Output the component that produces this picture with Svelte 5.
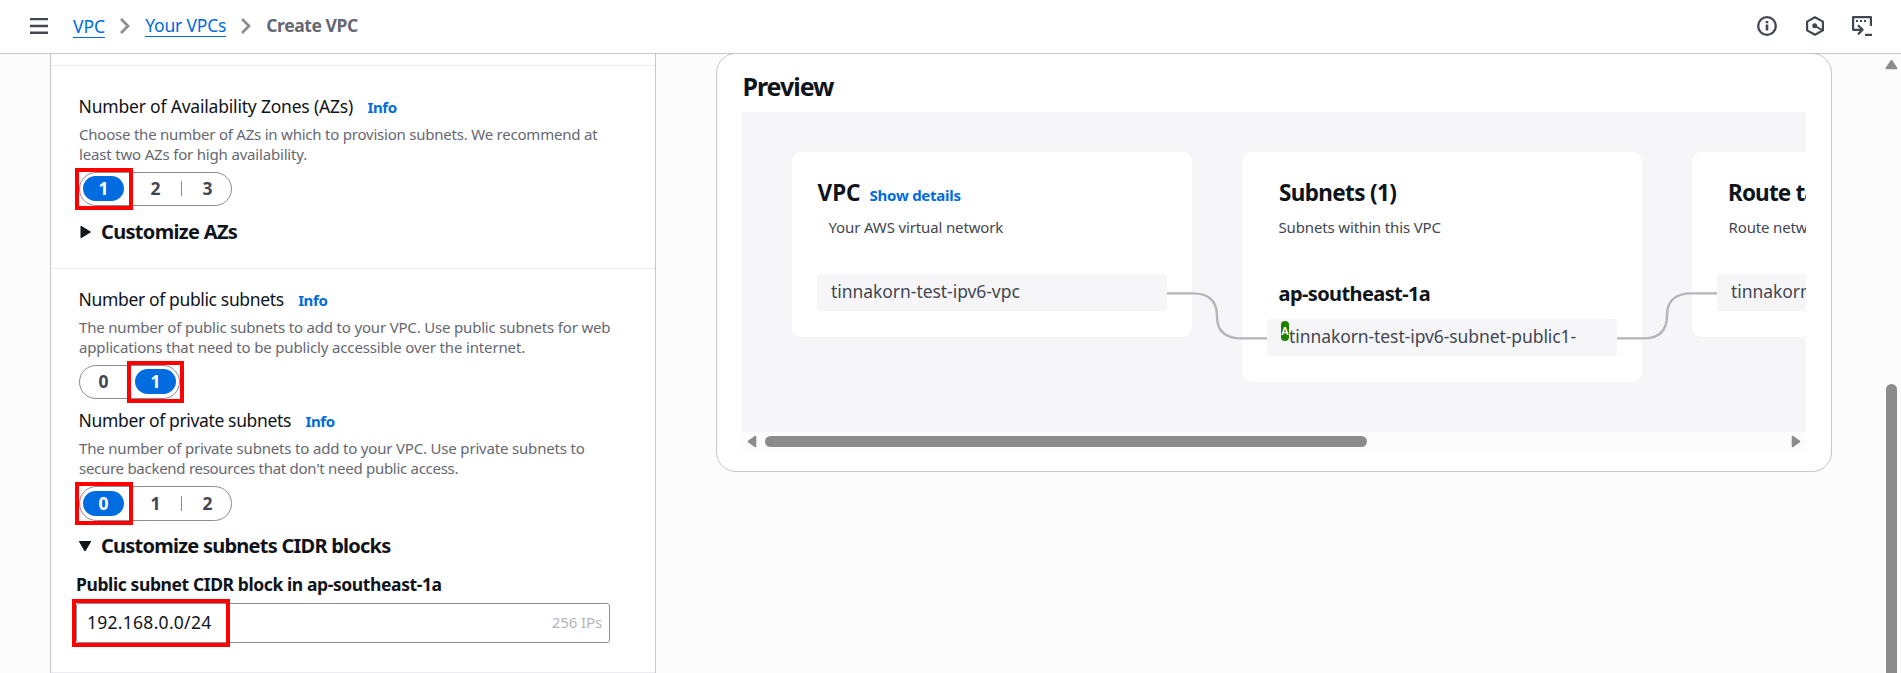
<script>
  const sets = {
    az: { options: [1, 2, 3], selected: 0 },
    pub: { options: [0, 1], selected: 1 },
    priv: { options: [0, 1, 2], selected: 0 },
  };
</script>

{#snippet segmented(set, tall)}
  <div class="segmented" class:tall>
    {#each set.options as option, i}
      {#if i > 0}
        <span class="sep" class:line={i - 1 !== set.selected && i !== set.selected}></span>
      {/if}
      <button class="segment" class:selected={i === set.selected}>
        {option}
        {#if i === set.selected}
          <span class="mark" class:last={i === set.options.length - 1}></span>
        {/if}
      </button>
    {/each}
  </div>
{/snippet}

{#snippet chevron()}
  <svg class="chevron" width="12" height="18" viewBox="0 0 12 18"><path d="M2 2l7 7-7 7" fill="none" stroke="#8c8c94" stroke-width="2.7" /></svg>
{/snippet}

<div class="page">
  <header>
    <svg class="burger" width="18" height="18" viewBox="0 0 18 18"><path d="M0 2.1h18M0 9h18M0 15.8h18" stroke="#424650" stroke-width="2.4" /></svg>
    <nav>
      <a class="crumb first" href="#vpc">VPC</a>
      {@render chevron()}
      <a class="crumb second" href="#vpcs">Your VPCs</a>
      {@render chevron()}
      <span class="current">Create VPC</span>
    </nav>
    <div class="tools">
      <svg width="20" height="20" viewBox="0 0 20 20" fill="none" stroke="#424650" stroke-width="2.3"><circle cx="10" cy="10" r="8.8" /><path d="M10 8.6v6M10 5v2.3" stroke-width="2.6" /></svg>
      <svg width="20" height="20" viewBox="0 0 20 20" fill="none" stroke="#424650" stroke-width="2.2" stroke-linejoin="round"><path d="M10 1.3l7.9 4.3v8.8L10 18.7l-7.9-4.3V5.6z" /><circle cx="9.7" cy="9.8" r="2.5" fill="#424650" stroke="none" /><path d="M10 10l7 4" stroke-width="2" /></svg>
      <svg width="20" height="20" viewBox="0 0 20 20" fill="none" stroke="#424650" stroke-width="2.2"><path d="M18.9 10V1.1H1.1v12.7h9M6 9.2l4.6 4.6L6 18.4" stroke-linejoin="round" /><path d="M4 5h2M8 5h2M12 5h2M13 18.8h7" /></svg>
    </div>
  </header>

  <main>
    <section class="form">
      <div class="block top"></div>
      <div class="block zones">
        <div class="label"><span class="name wide">Number of Availability Zones (AZs)</span><a href="#info">Info</a></div>
        <p><span class="tight">Choose the number of AZs in which to provision subnets. We recommend at</span><br />least two AZs for high availability.</p>
        {@render segmented(sets.az, false)}
        <div class="expander">
          <svg width="14" height="14" viewBox="0 0 14 14"><path d="M3 1.2v11.6L12.4 7z" fill="#0f141a" stroke="#0f141a" stroke-linejoin="round" /></svg>
          <span>Customize AZs</span>
        </div>
      </div>
      <div class="block subnets">
        <div class="label"><span class="name">Number of public subnets</span><a href="#info">Info</a></div>
        <p>The number of public subnets to add to your VPC. Use public subnets for web<br /><span class="loose">applications that need to be publicly accessible over the internet.</span></p>
        {@render segmented(sets.pub, false)}
        <div class="label second"><span class="name">Number of private subnets</span><a href="#info">Info</a></div>
        <p>The number of private subnets to add to your VPC. Use private subnets to<br /><span class="tighter">secure backend resources that don't need public access.</span></p>
        {@render segmented(sets.priv, true)}
        <div class="expander open">
          <svg width="14" height="14" viewBox="0 0 14 14"><path d="M1.4 2.5h11.3L7 12z" fill="#0f141a" stroke="#0f141a" stroke-linejoin="round" /></svg>
          <span>Customize subnets CIDR blocks</span>
        </div>
        <div class="cidr-label">Public subnet CIDR block in ap-southeast-1a</div>
        <div class="input">
          <span class="value">192.168.0.0/24</span>
          <span class="hint">256 IPs</span>
          <span class="mark"></span>
        </div>
      </div>
    </section>

    <section class="preview">
      <h2>Preview</h2>
      <div class="map">
        <div class="card">
          <h3 class="vpc">VPC<a href="#details">Show details</a></h3>
          <div class="sub vpc">Your AWS virtual network</div>
          <div class="row first">tinnakorn-test-ipv6-vpc</div>
        </div>
        <div class="card">
          <h3>Subnets (1)</h3>
          <div class="sub">Subnets within this VPC</div>
          <h4>ap-southeast-1a</h4>
          <div class="row zone"><span class="badge">A</span><span>tinnakorn-test-ipv6-subnet-public1-</span></div>
        </div>
        <div class="card">
          <h3 class="routes">Route tables (1)</h3>
          <div class="sub">Route network traffic to resources</div>
          <div class="row first">tinnakorn-test-ipv6-rtb-public</div>
        </div>
        <svg class="links" width="1064" height="320" viewBox="0 0 1064 320" fill="none" stroke="#b4b4bb" stroke-width="2.4">
          <path d="M425 181.4h26q24 0 24 23 0 22 25 22h25" />
          <path d="M875 226.4h26q24 0 24-23 0-22 25-22h25" />
        </svg>
      </div>
      <div class="hscroll">
        <svg width="10" height="13" viewBox="0 0 10 13"><path d="M8.5 1.5v10L1.5 6.5z" fill="#8b8b8b" stroke="#8b8b8b" stroke-width="1.6" stroke-linejoin="round" /></svg>
        <div class="rail"><div class="thumb"></div></div>
        <svg width="10" height="13" viewBox="0 0 10 13"><path d="M1.5 1.5v10l7-5z" fill="#8b8b8b" stroke="#8b8b8b" stroke-width="1.6" stroke-linejoin="round" /></svg>
      </div>
    </section>

    <aside class="vscroll">
      <svg width="13" height="11" viewBox="0 0 13 11"><path d="M1.5 9.3h10L6.5 1.7z" fill="#8b8b8b" stroke="#8b8b8b" stroke-width="1.8" stroke-linejoin="round" /></svg>
      <div class="thumb"></div>
    </aside>
  </main>
</div>

<style>
  :global(body) { margin: 0; overflow: hidden; }
  .page {
    display: flex; flex-direction: column; box-sizing: border-box;
    width: 100vw; height: 673px; overflow: hidden;
    background: #fcfcfd; color: #0f141a;
    font: 17.5px/25px "Noto Sans", "Open Sans", sans-serif;
  }
  .page * { box-sizing: border-box; }
  svg { display: block; flex: none; }
  a { color: #006ce0; text-decoration: none; }
  p, h2, h3, h4 { margin: 0; }

  header {
    position: relative; z-index: 2; flex: none;
    display: flex; align-items: center;
    height: 54px; padding: 0 29px 0 30px;
    background: #fff; border-bottom: 1px solid #c6c6cd;
  }
  .burger { margin-top: -1px; }
  nav { display: flex; align-items: center; margin: -2px 0 0 25px; }
  .crumb { line-height: 22px; border-bottom: 1px solid #006ce0; letter-spacing: -0.18px; }
  .crumb.first { margin-top: 2px; letter-spacing: 0; }
  .chevron { margin: 1px 14px 0 14px; }
  .current { color: #656871; font-weight: 700; letter-spacing: -0.42px; }
  .tools { display: flex; gap: 28px; margin: -1px 0 0 auto; }
  .tools svg:last-child { margin-left: -1px; }

  main { flex: 1; display: flex; min-height: 0; padding-left: 50px; }

  .form {
    width: 606px; flex: none; background: #fff;
    border: solid #c6c6cd; border-width: 0 1px;
  }
  .block { border-bottom: 1px solid #ebebf0; padding: 0 44px 0 28px; }
  .top { height: 12px; }
  .zones { height: 203px; padding-top: 28px; }
  .subnets { height: 404px; padding-top: 18px; }
  .label { display: flex; align-items: baseline; height: 25px; margin-left: -0.4px; }
  .label.second { margin-top: 9px; }
  .name { letter-spacing: -0.36px; }
  .name.wide { letter-spacing: -0.2px; }
  .label a { margin-left: 14.5px; font-size: 15px; font-weight: 700; letter-spacing: -0.4px; }
  p {
    margin-top: 5px; color: #656871; white-space: nowrap;
    font-size: 15px; line-height: 20px; letter-spacing: -0.18px;
  }
  .tight { letter-spacing: -0.22px; }
  .tighter { letter-spacing: -0.28px; }
  .loose { letter-spacing: -0.15px; }
  .segmented {
    display: flex; align-items: flex-start; width: max-content; height: 34px;
    margin: 8px 0 0; padding: 3px 3px 0;
    border: 1px solid #8c8c94; border-radius: 17px;
  }
  .segmented.tall { height: 35px; padding-top: 4px; border-radius: 18px; }
  .segment {
    position: relative; width: 41px; height: 25px; padding: 0;
    border: 0; border-radius: 13px; background: none; color: #424650;
    font: inherit; font-weight: 700; line-height: 23px; text-align: center;
  }
  .segment.selected { background: #006ce0; color: #fff; }
  .sep { display: flex; justify-content: center; width: 11px; height: 15px; margin-top: 5px; }
  .sep.line::before { content: ""; width: 1px; background: #8c8c94; }
  .mark { position: absolute; border: 4px solid #f00; }
  .segment .mark { left: -8px; top: -8px; width: 58px; height: 42px; }
  .segment .mark.last { width: 57px; }
  .tall .segment .mark { top: -9px; height: 43px; }
  .expander {
    display: flex; align-items: center; gap: 9px; height: 25px; margin-top: 13px;
    font-size: 20px; font-weight: 700; letter-spacing: -0.68px;
  }
  .expander svg { margin: 1px 0 0 -1px; }
  .expander.open { margin-top: 12px; letter-spacing: -0.76px; }
  .cidr-label { margin: 14px 0 0 -3px; font-weight: 700; letter-spacing: -0.4px; }
  .input {
    position: relative; display: flex; align-items: flex-start; justify-content: space-between;
    width: 534px; height: 40px; margin: 6px 0 0 -3px; padding: 6px 7px 0 10px;
    border: 1px solid #8c8c94; border-radius: 3px;
  }
  .value { letter-spacing: 0.27px; }
  .hint { color: #b4b4bb; font-size: 15px; letter-spacing: -0.1px; line-height: 24px; }
  .input .mark { left: -5px; top: -5px; width: 158px; height: 48px; }

  .preview {
    flex: none; width: 1116px; height: 419px; margin: -1px 0 0 60px; padding: 25px 25px 0;
    background: #fff; border: 1px solid #c6c6cd; border-radius: 20px;
  }
  h2 { height: 33px; padding-left: 0.5px; font-size: 25px; line-height: 14px; letter-spacing: -1.05px; }
  .map {
    position: relative; display: flex; align-items: flex-start; gap: 50px;
    height: 320px; padding: 40px 50px 0; overflow: hidden; background: #f6f6f9;
  }
  .card { flex: none; width: 400px; padding: 25px; border-radius: 10px; background: #fff; }
  h3 { height: 31px; padding-left: 12px; font-size: 22.5px; line-height: 31px; letter-spacing: -0.65px; white-space: nowrap; }
  h3.vpc { padding-left: 0.5px; letter-spacing: 0; }
  h3.routes { padding-left: 11px; letter-spacing: -0.85px; }
  h3 a { margin-left: 9px; font-size: 15px; letter-spacing: -0.25px; }
  .sub {
    height: 20px; margin-top: 9px; padding-left: 11.5px; color: #424650; white-space: nowrap;
    font-size: 15px; line-height: 20px; letter-spacing: -0.14px;
  }
  h4 { margin-top: 44px; padding-left: 11.5px; font-size: 20px; line-height: 25px; letter-spacing: -0.6px; }
  .row {
    display: flex; height: 37px; padding: 5px 14px; border-radius: 3px;
    background: #f6f6f9; color: #424650; white-space: nowrap; letter-spacing: -0.05px;
  }
  .row.first { margin-top: 37px; margin-bottom: 1px; }
  .row.zone { margin-top: 13px; margin-bottom: 1px; letter-spacing: -0.08px; }
  .badge {
    width: 8px; height: 20px; margin: -3px 0 0; border-radius: 4px; background: #1d8102; color: #fff;
    font-size: 11px; font-weight: 600; line-height: 20px; text-align: center;
  }
  .links { position: absolute; left: 0; top: 0; }
  .hscroll { display: flex; align-items: center; height: 19px; padding: 0 5px; background: #fcfcfc; }
  .rail { flex: 1; padding: 0 8px; }
  .rail .thumb { width: 602px; height: 11px; border-radius: 6px; background: #8b8b8b; }
  .vscroll { display: flex; flex-direction: column; align-items: center; width: 19px; margin-left: auto; padding-top: 5px; background: #fcfcfc; }
  .vscroll .thumb { width: 11px; height: 300px; margin-top: 314px; border-radius: 6px; background: #8b8b8b; flex: none; }
</style>
